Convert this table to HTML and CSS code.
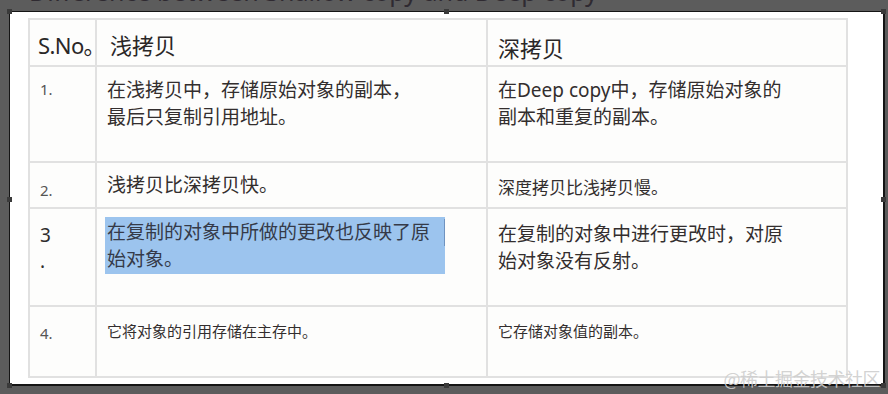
FILE: index.html
```html
<!DOCTYPE html>
<html lang="zh-CN">
<head>
<meta charset="utf-8">
<title>浅拷贝与深拷贝</title>
<link rel="stylesheet" href="styles.css">
</head>
<body>
<div class="topbar">
  <h1 class="title">Difference between Shallow copy and Deep copy</h1>
</div>
<div class="frame">
  <table class="compare">
    <colgroup>
      <col class="c-no">
      <col class="c-shallow">
      <col class="c-deep">
    </colgroup>
    <tr class="r-head">
      <td class="head head-no">S.No。</td>
      <td class="head head-shallow">浅拷贝</td>
      <td class="head head-deep">深拷贝</td>
    </tr>
    <tr class="r-1">
      <td class="num n-1">1.</td>
      <td class="txt t-1">在浅拷贝中，存储原始对象的副本，<br>最后只复制引用地址。</td>
      <td class="txt t-1">在Deep copy中，存储原始对象的<br>副本和重复的副本。</td>
    </tr>
    <tr class="r-2">
      <td class="num n-2">2.</td>
      <td class="txt t-2">浅拷贝比深拷贝快。</td>
      <td class="txt t-2b">深度拷贝比浅拷贝慢。</td>
    </tr>
    <tr class="r-3">
      <td class="num n-3">3<br>.</td>
      <td class="txt t-3a">
        <div class="selected">
          <div class="sel-line caret">在复制的对象中所做的更改也反映了原</div>
          <div class="sel-line">始对象。</div>
        </div>
      </td>
      <td class="txt t-3b">在复制的对象中进行更改时，对原<br>始对象没有反射。</td>
    </tr>
    <tr class="r-4">
      <td class="num n-4">4.</td>
      <td class="txt t-4">它将对象的引用存储在主存中。</td>
      <td class="txt t-4">它存储对象值的副本。</td>
    </tr>
  </table>

  <span class="handle h-tl"></span>
  <span class="handle h-tm"></span>
  <span class="handle h-tr"></span>
  <span class="handle h-ml"></span>
  <span class="handle h-mr"></span>
  <span class="handle h-bl"></span>
  <span class="handle h-bm"></span>
  <span class="handle h-br"></span>
</div>
<div class="watermark">@稀土掘金技术社区</div>
</body>
</html>
```
FILE: styles.css
```css
html, body {
  margin: 0;
  padding: 0;
}

body {
  width: 888px;
  height: 394px;
  background: #5c5c5c;
  overflow: hidden;
  position: relative;
  font-family: "Noto Sans", "Noto Sans CJK SC", sans-serif;
  color: #332e2e;
}

/* heading strip above the framed table, mostly scrolled out of view */
.topbar {
  height: 11px;
  overflow: hidden;
  display: flex;
  align-items: flex-end;
}

.title {
  margin: 0;
  padding: 0 0 7px 29px;
  font-size: 25px;
  line-height: 25px;
  font-weight: 400;
  color: #2f2a31;
  white-space: nowrap;
}

/* selected picture frame */
.frame {
  position: relative;
  box-sizing: border-box;
  width: 876px;
  height: 375px;
  margin-left: 9px;
  background: #ffffff;
  border-top: 1px solid #151515;
  border-left: 1px solid #151515;
  border-right: 2px solid #151515;
  border-bottom: 2px solid #151515;
  padding: 6px 0 0 18px;
}

.handle {
  position: absolute;
  width: 5px;
  height: 5px;
  background: #3a3a3a;
}
.h-tl { left: -3px; top: -3px; }
.h-tm { left: 434px; top: -3px; }
.h-tr { right: -3px; top: -3px; }
.h-ml { left: -3px; top: 185px; }
.h-mr { right: -3px; top: 185px; }
.h-bl { left: -3px; bottom: -4px; }
.h-bm { left: 434px; bottom: -4px; }
.h-br { right: -3px; bottom: -4px; }

/* comparison table */
.compare {
  border-collapse: separate;
  border-spacing: 0;
  table-layout: fixed;
  width: 820px;
  border-top: 2px solid #e1e1e1;
  border-left: 2px solid #e1e1e1;
}

.c-no { width: 67px; }
.c-shallow { width: 391px; }
.c-deep { width: 360px; }

.compare td {
  box-sizing: border-box;
  vertical-align: top;
  border-right: 2px solid #e1e1e1;
  border-bottom: 2px solid #e1e1e1;
  padding: 0 0 0 10px;
  background: #fdfdfc;
  font-family: "Noto Sans", "Noto Sans CJK SC", sans-serif;
}

.r-head td { height: 47px; }
.r-1 td { height: 96px; }
.r-2 td { height: 46px; }
.r-3 td { height: 98px; }
.r-4 td { height: 71px; }

/* header row */
.compare .head {
  font-size: 22px;
  line-height: 30px;
  color: #2a2727;
  padding-top: 10px;
}
.compare .head-no {
  padding-left: 8px;
  white-space: nowrap;
  letter-spacing: -0.6px;
}
.compare .head-shallow { padding-left: 13px; }
.compare .head-deep { padding-top: 13px; }

/* row numbers */
.compare .num {
  font-size: 15px;
  line-height: 20px;
  color: #555555;
}
.compare .n-1 { padding-top: 12px; }
.compare .n-2 { padding-top: 17px; }
.compare .n-3 {
  font-size: 19px;
  line-height: 26px;
  padding-top: 13px;
  color: #2e2c2c;
}
.compare .n-4 { padding-top: 16px; }

/* body cells */
.compare .txt {
  font-size: 19px;
  line-height: 27px;
}
.compare .t-1 { padding-top: 10px; }
.compare .t-2 { padding-top: 9px; }
.compare .t-2b {
  font-size: 17px;
  line-height: 24px;
  padding-top: 13px;
}
.compare .t-3a { padding-top: 8px; padding-left: 8px; }
.compare .t-3b { padding-top: 12px; }
.compare .t-4 {
  font-size: 15px;
  line-height: 22px;
  padding-top: 13px;
}

/* highlighted text block */
.selected {
  width: 340px;
  box-sizing: border-box;
  padding: 2px 0 1px 2px;
  background: #9cc4ee;
  color: #353a48;
}
.sel-line {
  white-space: nowrap;
}
.caret {
  box-shadow: inset -1px 0 0 #6f93c0;
}

.watermark {
  position: absolute;
  right: 8px;
  bottom: 5px;
  font-family: "Noto Sans CJK SC", sans-serif;
  font-size: 18px;
  line-height: 22px;
  color: rgba(205, 205, 205, 0.9);
  letter-spacing: -0.5px;
}
```
